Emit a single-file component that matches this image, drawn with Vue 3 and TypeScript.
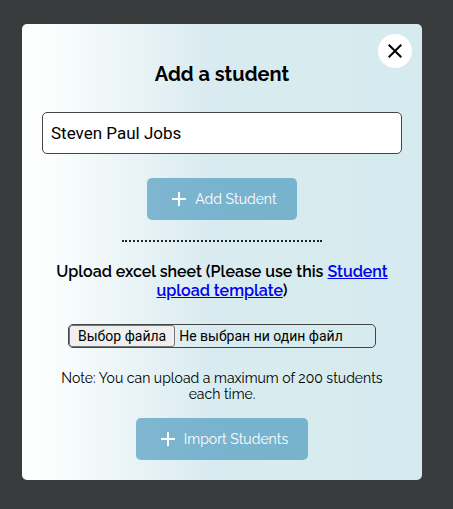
<script setup lang="ts">
import { ref } from 'vue'

const open = ref(true)
const studentName = ref('Steven Paul Jobs')
const fileName = ref('')

function onFileChange(event: Event) {
  const input = event.target as HTMLInputElement
  fileName.value = input.files?.[0]?.name ?? ''
}
</script>

<template>
  <main class="backdrop">
    <section v-if="open" class="modal" role="dialog" aria-labelledby="modal-title">
      <button class="close" type="button" aria-label="Close" @click="open = false">
        <svg viewBox="0 0 24 24" width="24" height="24" aria-hidden="true">
          <path d="M19 6.41 17.59 5 12 10.59 6.41 5 5 6.41 10.59 12 5 17.59 6.41 19 12 13.41 17.59 19 19 17.59 13.41 12z" />
        </svg>
      </button>

      <h2 id="modal-title" class="title">Add a student</h2>

      <input v-model="studentName" class="name" type="text" aria-label="Student name" />

      <button class="action" type="button">
        <svg viewBox="0 0 24 24" width="24" height="24" aria-hidden="true">
          <path d="M11 5h2v6h6v2h-6v6h-2v-6H5v-2h6z" />
        </svg>
        <span>Add Student</span>
      </button>

      <hr class="divider" />

      <h3 class="upload-title">
        Upload excel sheet (Please use this <a href="#template">Student upload template</a>)
      </h3>

      <label class="file">
        <input class="file-input" type="file" accept=".xls,.xlsx" @change="onFileChange" />
        <span class="file-button">Выбор файла</span>
        <span class="file-name">{{ fileName || 'Не выбран ни один файл' }}</span>
      </label>

      <p class="note">Note: You can upload a maximum of 200 students each time.</p>

      <button class="action" type="button">
        <svg viewBox="0 0 24 24" width="24" height="24" aria-hidden="true">
          <path d="M11 5h2v6h6v2h-6v6h-2v-6H5v-2h6z" />
        </svg>
        <span>Import Students</span>
      </button>
    </section>
  </main>
</template>

<style>
body {
  background: #383c3d;
}
</style>

<style scoped>
.backdrop {
  box-sizing: border-box;
  min-height: 100vh;
  padding: 24px 31px 29px 22px;
  background: #383c3d;
  color: #000;
  font-family: Raleway, Lato, "Open Sans", sans-serif;
}

.modal {
  position: relative;
  box-sizing: border-box;
  display: flex;
  flex-direction: column;
  align-items: center;
  padding: 36px 20px 20px;
  border-radius: 5px;
  background: linear-gradient(90deg, #fff 0%, #fcfefe 6%, #d9ebf0 47%, #d6ebef 100%);
}

.close {
  position: absolute;
  top: 10px;
  right: 10px;
  display: grid;
  place-items: center;
  width: 34px;
  height: 34px;
  padding: 0;
  border: 0;
  border-radius: 50%;
  background: #fff;
  cursor: pointer;
}

.title {
  margin: 0 0 24px;
  font-size: 20px;
  font-weight: 700;
  line-height: 28px;
}

.name {
  box-sizing: border-box;
  width: 100%;
  height: 42px;
  margin-bottom: 24px;
  padding: 0 8px;
  border: 1px solid #444;
  border-radius: 5px;
  background: #fff;
  color: #000;
  font-family: Roboto, sans-serif;
  font-size: 17px;
}

.action {
  display: flex;
  align-items: center;
  gap: 4px;
  height: 42px;
  padding: 0 20px;
  border: 0;
  border-radius: 5px;
  background: rgb(38 132 178 / 54%);
  color: #fff;
  font-family: inherit;
  font-size: 14px;
  font-weight: 400;
  line-height: 18px;
  cursor: pointer;
}

.action svg {
  fill: currentColor;
}

.divider {
  width: 200px;
  margin: 20px 0;
  border: 0;
  border-top: 2px dotted #222;
}

.upload-title {
  max-width: 340px;
  margin: 0 0 24px;
  font-size: 16px;
  font-weight: 600;
  line-height: 19px;
  text-align: center;
}

.upload-title a {
  color: #00e;
}

.file {
  position: relative;
  box-sizing: border-box;
  display: flex;
  align-items: center;
  gap: 4px;
  width: 308px;
  height: 24px;
  margin-bottom: 22px;
  border: 1px solid #444;
  border-radius: 5px;
  font-family: Roboto, sans-serif;
  font-size: 14px;
  font-weight: 400;
  cursor: pointer;
}

.file-input {
  position: absolute;
  inset: 0;
  width: 100%;
  opacity: 0;
  cursor: pointer;
}

.file-button {
  box-sizing: border-box;
  height: 22px;
  padding: 0 8px;
  border: 1px solid #767676;
  border-radius: 3px;
  background: #efefef;
  line-height: 20px;
}

.note {
  max-width: 340px;
  margin: 0 0 16px;
  font-size: 14px;
  font-weight: 400;
  font-variant-numeric: oldstyle-nums;
  line-height: 16px;
  text-align: center;
}
</style>
